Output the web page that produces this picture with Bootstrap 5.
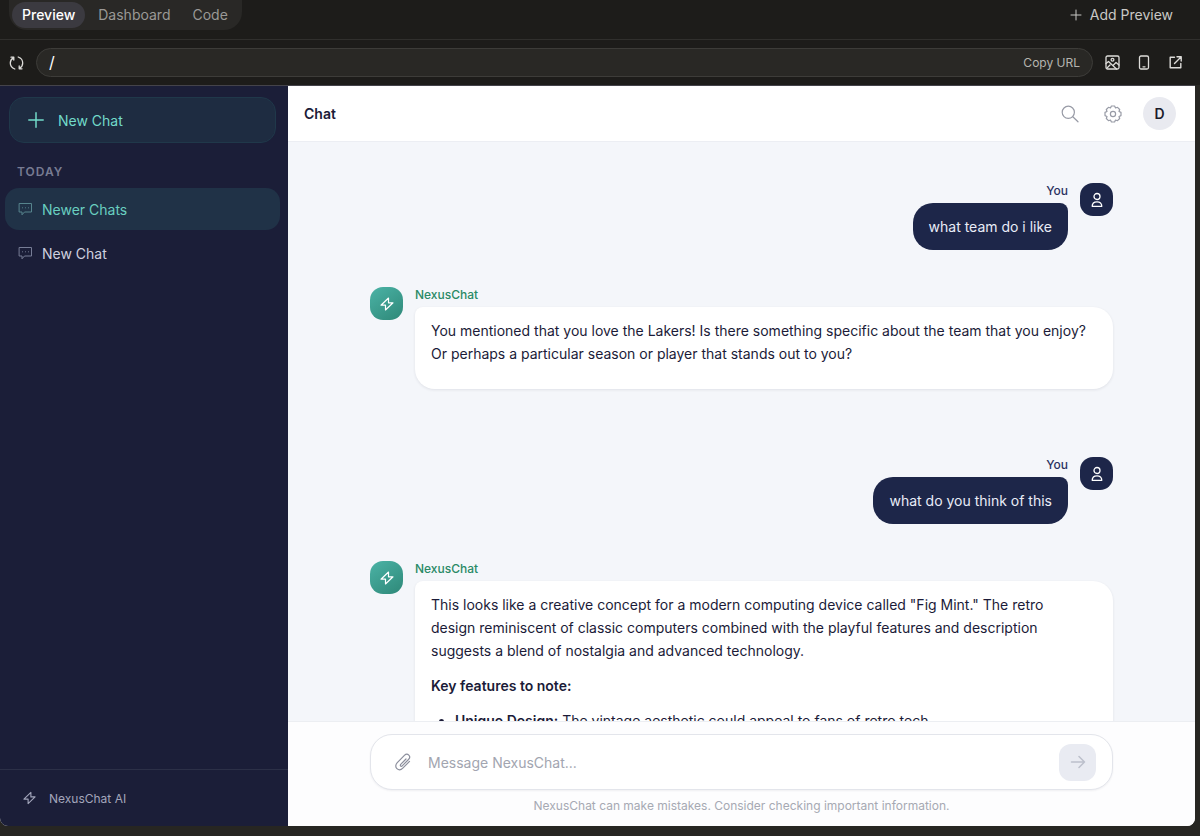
<!DOCTYPE html>
<html lang="en">
<head>
<meta charset="utf-8">
<meta name="viewport" content="width=device-width, initial-scale=1">
<title>NexusChat</title>
<link href="https://cdn.jsdelivr.net/npm/bootstrap@5.3.0/dist/css/bootstrap.min.css" rel="stylesheet">
<style>
  body { font-family: Inter, sans-serif; font-size: 14px; line-height: 23px; background: #272622; color: #1b1b38; }
  svg { display: block; fill: none; stroke: currentColor; stroke-linecap: round; stroke-linejoin: round; flex: none; }
  button { font: inherit; }
  .plain-btn { background: none; border: 0; padding: 0; color: inherit; }

  .tool-tabs { height: 40px; border-bottom: 1px solid #302f2d; padding: 0 27px 10px 9px; background: #1d1c1a; color: #c9c8c5; }
  .tab-set { background: #292826; border-radius: 0 0 18px 18px; height: 30px; padding: 0 3px; color: #9a9996; }
  .tab-set button { height: 26px; padding: 0 11px; border-radius: 13px; }
  .tab-set .on { background: #3b3a40; color: #fff; font-weight: 500; padding: 0 10px; margin-right: 2px; }
  .url-row { height: 45px; padding: 0 17px 0 9px; gap: 12px; background: #1d1c1a; color: #dddcd9; }
  .url-box { background: #292825; border: 1px solid #3d3c39; border-radius: 15px; height: 29px; padding: 0 12px; }
  .url-box input { background: none; border: 0; outline: 0; padding: 0; color: #fff; font-size: 16px; min-width: 0; }
  .copy-url { font-size: 12px; color: #b5b4b0; }
  .url-tools { gap: 16px; }

  .app-frame { margin: 0 5px 10px 0; border-top: 1px solid #44434a; border-radius: 0 0 8px 8px; background: #fff; }
  .side-pane { width: 288px; background: #1b1e38; color: #c7cadb; }
  .new-chat { margin: 11px 12px 0 9px; height: 46px; border: 1px solid #20384a; border-radius: 15px; background: #1e2c41; color: #72dac9; padding: 0 18px; gap: 14px; }
  .side-head { font-size: 12px; font-weight: 600; line-height: 16px; letter-spacing: 1px; color: #777b92; margin: 21px 17px 8px; }
  .chat-list { padding: 0 8px 0 5px; gap: 2px; }
  .chat-list a { height: 42px; border: 1px solid transparent; border-radius: 14px; padding: 0 12px; gap: 9px; color: #cfd0df; text-decoration: none; }
  .chat-list svg { color: #777d96; }
  .chat-list .on { background: #203247; color: #69cfc0; }
  .chat-list .on svg { color: #56848d; }
  .side-foot { height: 57px; border-top: 1px solid #2c3047; padding: 0 23px; gap: 13px; font-size: 12px; color: #a3a6bb; }

  .main-head { height: 56px; border-bottom: 1px solid #eceef3; padding: 0 19px 0 16px; }
  .main-head h1 { font-size: 14px; font-weight: 600; line-height: 23px; }
  .head-tools { gap: 21px; color: #989ba6; }
  .user-dot { width: 33px; height: 33px; border-radius: 50%; background: #e9eaf0; color: #1b1b2b; font-weight: 600; }
  .thread-area { background: #f4f6fa; overflow: hidden; }
  .wide-col { width: 100%; max-width: 743px; margin: 0 auto; }
  .thread { padding-top: 41px; gap: 37px; }
  .msg { gap: 12px; }
  .msg-bot { padding-bottom: 31px; }
  .who { font-size: 12px; font-weight: 500; line-height: 16px; margin-bottom: 4px; }
  .face { width: 33px; height: 33px; border-radius: 13px; color: #fff; }
  .msg-user .face { background: #1d2649; }
  .msg-user .who { color: #2a3160; }
  .msg-bot .face { background: linear-gradient(145deg, #4bb3a6, #2e8878); }
  .msg-bot .who { color: #2a8a66; }
  .bubble { padding: 12px 16px; border-radius: 20px; }
  .msg-user .bubble { background: #1d2649; color: #e9ecf7; border-top-right-radius: 8px; }
  .msg-bot .bubble { background: #fff; border-top-left-radius: 8px; padding-right: 24px; box-shadow: 0 1px 3px #1b1b3818; }
  .bubble p { margin-bottom: 12px; }
  .bubble ul { padding-left: 24px; }
  .bubble strong { font-weight: 600; }

  .composer { border-top: 1px solid #eceef2; background: #fdfdfe; padding: 12px 0; }
  .entry { height: 56px; border: 1px solid #e3e5eb; border-radius: 22px; background: #fff; padding: 0 16px 0 23px; gap: 16px; color: #8b8e9c; box-shadow: 0 1px 2px #1b1b3810; }
  .entry input { border: 0; outline: 0; padding: 0; min-width: 0; color: #1b1b38; background: none; }
  .entry input::placeholder { color: #a2a5b0; opacity: 1; }
  .send { width: 37px; height: 37px; border-radius: 12px; background: #e9ebf2; color: #bcc0cc; }
  .note { font-size: 12px; line-height: 16px; color: #a6a9b3; margin-top: 8px; }
</style>
</head>
<body class="vh-100 d-flex flex-column overflow-hidden">
  <nav class="tool-tabs d-flex justify-content-between align-items-center flex-shrink-0">
    <div class="tab-set d-flex align-items-center">
      <button class="plain-btn on">Preview</button>
      <button class="plain-btn">Dashboard</button>
      <button class="plain-btn">Code</button>
    </div>
    <button class="plain-btn d-flex align-items-center gap-2">
      <svg width="12" height="12" viewBox="0 0 12 12"><path d="M6 1v10M1 6h10"/></svg>Add Preview
    </button>
  </nav>
  <div class="url-row d-flex align-items-center flex-shrink-0">
    <button class="plain-btn" aria-label="Reload">
      <svg width="15" height="16" viewBox="0 0 15 16" stroke-width="1.3"><path d="M5.8 14C3 13 1.300 10.900 1.300 8c0-2.200 1.200-4.200 3.100-5.200M2 2.200h2.800V5M9.200 2c2.800 1 4.500 3.100 4.500 6 0 2.200-1.200 4.200-3.100 5.200M13 13.800h-2.800V11"/></svg>
    </button>
    <div class="url-box d-flex align-items-center flex-grow-1">
      <input class="flex-grow-1" type="text" value="/" aria-label="Path">
      <button class="plain-btn copy-url">Copy URL</button>
    </div>
    <div class="url-tools d-flex align-items-center">
      <button class="plain-btn" aria-label="Screenshot"><svg width="15" height="15" viewBox="0 0 15 15" stroke-width="1.300"><rect x="1" y="1" width="13" height="13" rx="1.500"/><circle cx="7.500" cy="4.800" r="1.400"/><path d="M1 8.500l2.500-2 8 7.500M8 10.500l3-3 3 2.500M2 13l3-3"/></svg></button>
      <button class="plain-btn" aria-label="Mobile view"><svg width="16" height="15" viewBox="0 0 16 15" stroke-width="1.300"><rect x="3.500" y="1" width="9" height="13" rx="1.500"/><path d="M7 11.800h2"/></svg></button>
      <button class="plain-btn" aria-label="Open in new tab"><svg width="15" height="15" viewBox="0 0 15 15" stroke-width="1.400"><path d="M6.500 2.200H2.200v10.600h10.600V8.500M9 1.800h4.200V6M13 2L6.500 8.500"/></svg></button>
    </div>
  </div>

  <div class="app-frame d-flex flex-grow-1 overflow-hidden">
    <aside class="side-pane d-flex flex-column flex-shrink-0">
      <button class="new-chat d-flex align-items-center">
        <svg width="16" height="16" viewBox="0 0 16 16" stroke-width="1.500"><path d="M8 .8v14.400M.8 8h14.400"/></svg>New Chat
      </button>
      <h2 class="side-head">TODAY</h2>
      <nav class="chat-list d-flex flex-column">
        <a href="#" class="on d-flex align-items-center"><svg width="15" height="14" viewBox="0 0 15 14"><path d="M1.500 1.500h12v8.500h-7L4 12.800V10H1.500zM4.500 5.800h.1M7.500 5.800h.1M10.500 5.800h.1"/></svg>Newer Chats</a>
        <a href="#" class="d-flex align-items-center"><svg width="15" height="14" viewBox="0 0 15 14"><path d="M1.500 1.500h12v8.500h-7L4 12.800V10H1.500zM4.500 5.800h.1M7.500 5.800h.1M10.500 5.800h.1"/></svg>New Chat</a>
      </nav>
      <div class="side-foot d-flex align-items-center mt-auto">
        <svg width="13" height="14" viewBox="0 0 14 14" stroke-width="1.200"><path d="M8.500 1L1 8.200h4.500L5.500 13 13 5.800H8.500z"/></svg>NexusChat AI
      </div>
    </aside>

    <main class="d-flex flex-column flex-grow-1">
      <header class="main-head d-flex align-items-center justify-content-between flex-shrink-0">
        <h1 class="mb-0">Chat</h1>
        <div class="head-tools d-flex align-items-center">
          <button class="plain-btn me-1" aria-label="Search"><svg width="18" height="18" viewBox="0 0 18 18" stroke-width="1.200"><circle cx="7.300" cy="7.300" r="6.100"/><path d="M11.800 11.800l5.200 5"/></svg></button>
          <button class="plain-btn" aria-label="Settings"><svg width="18" height="18" viewBox="0 0 18 18" stroke-width="1.200"><circle cx="9" cy="9" r="2.600"/><path d="M17 7.400v3.200L15 11.500l.7 2-2.200 2.200-2-.7-.9 2H7.400l-.9-2-2 .7-2.200-2.200.7-2-2-.9V7.400l2-.9-.7-2 2.200-2.200 2 .7.900-2h3.200l.9 2 2-.7 2.200 2.200-.7 2z"/></svg></button>
          <button class="plain-btn user-dot" aria-label="Account">D</button>
        </div>
      </header>

      <section class="thread-area flex-grow-1">
        <div class="thread wide-col d-flex flex-column">
          <article class="msg msg-user d-flex justify-content-end">
            <div class="d-flex flex-column align-items-end"><div class="who">You</div><div class="bubble">what team do i like</div></div>
            <div class="face d-flex align-items-center justify-content-center flex-shrink-0"><svg width="14" height="16" viewBox="0 0 14 16" stroke-width="1.300"><circle cx="7" cy="4.500" r="3"/><path d="M2.200 14.300c0-2.900 1.900-4.500 4.800-4.500s4.800 1.600 4.800 4.500z"/></svg></div>
          </article>
          <article class="msg msg-bot d-flex">
            <div class="face d-flex align-items-center justify-content-center flex-shrink-0"><svg width="14" height="14" viewBox="0 0 14 14" stroke-width="1.200"><path d="M8.500 1L1 8.200h4.500L5.500 13 13 5.800H8.500z"/></svg></div>
            <div class="flex-grow-1"><div class="who">NexusChat</div>
              <div class="bubble"><p>You mentioned that you love the Lakers! Is there something specific about the team that you enjoy? Or perhaps a particular season or player that stands out to you?</p></div>
            </div>
          </article>
          <article class="msg msg-user d-flex justify-content-end">
            <div class="d-flex flex-column align-items-end"><div class="who">You</div><div class="bubble">what do you think of this</div></div>
            <div class="face d-flex align-items-center justify-content-center flex-shrink-0"><svg width="14" height="16" viewBox="0 0 14 16" stroke-width="1.300"><circle cx="7" cy="4.500" r="3"/><path d="M2.200 14.300c0-2.900 1.900-4.500 4.800-4.500s4.800 1.600 4.800 4.500z"/></svg></div>
          </article>
          <article class="msg msg-bot d-flex">
            <div class="face d-flex align-items-center justify-content-center flex-shrink-0"><svg width="14" height="14" viewBox="0 0 14 14" stroke-width="1.200"><path d="M8.500 1L1 8.200h4.500L5.500 13 13 5.800H8.500z"/></svg></div>
            <div class="flex-grow-1"><div class="who">NexusChat</div>
              <div class="bubble"><p>This looks like a creative concept for a modern computing device called "Fig Mint." The retro design reminiscent of classic computers combined with the playful features and description suggests a blend of nostalgia and advanced technology.</p>
                <p><strong>Key features to note:</strong></p>
                <ul><li><strong>Unique Design:</strong> The vintage aesthetic could appeal to fans of retro tech.</li></ul></div>
            </div>
          </article>
        </div>
      </section>

      <footer class="composer flex-shrink-0">
        <div class="wide-col">
          <form class="entry d-flex align-items-center">
            <button type="button" class="plain-btn" aria-label="Attach file"><svg width="18" height="18" viewBox="0 0 18 18" stroke-width="1.200"><path d="M12 6l-5.300 5.400c-.5.600-.5 1.200-.1 1.600s1.100.4 1.600-.1l6.300-6.400c1.300-1.300 1.500-3.200.3-4.400s-3.100-1-4.400.3L3.300 9.600c-1.900 1.900-2 4.500-.4 6s4.100 1.400 5.900-.4l6.700-6.800"/></svg></button>
            <input class="flex-grow-1" type="text" placeholder="Message NexusChat..." aria-label="Message">
            <button type="button" class="plain-btn send d-flex align-items-center justify-content-center" aria-label="Send"><svg width="16" height="16" viewBox="0 0 16 16" stroke-width="1.500"><path d="M1.500 8h13M9 2.500L14.500 8 9 13.500"/></svg></button>
          </form>
          <p class="note text-center mb-0">NexusChat can make mistakes. Consider checking important information.</p>
        </div>
      </footer>
    </main>
  </div>
<script src="https://cdn.jsdelivr.net/npm/bootstrap@5.3.0/dist/js/bootstrap.bundle.min.js"></script>
</body>
</html>
